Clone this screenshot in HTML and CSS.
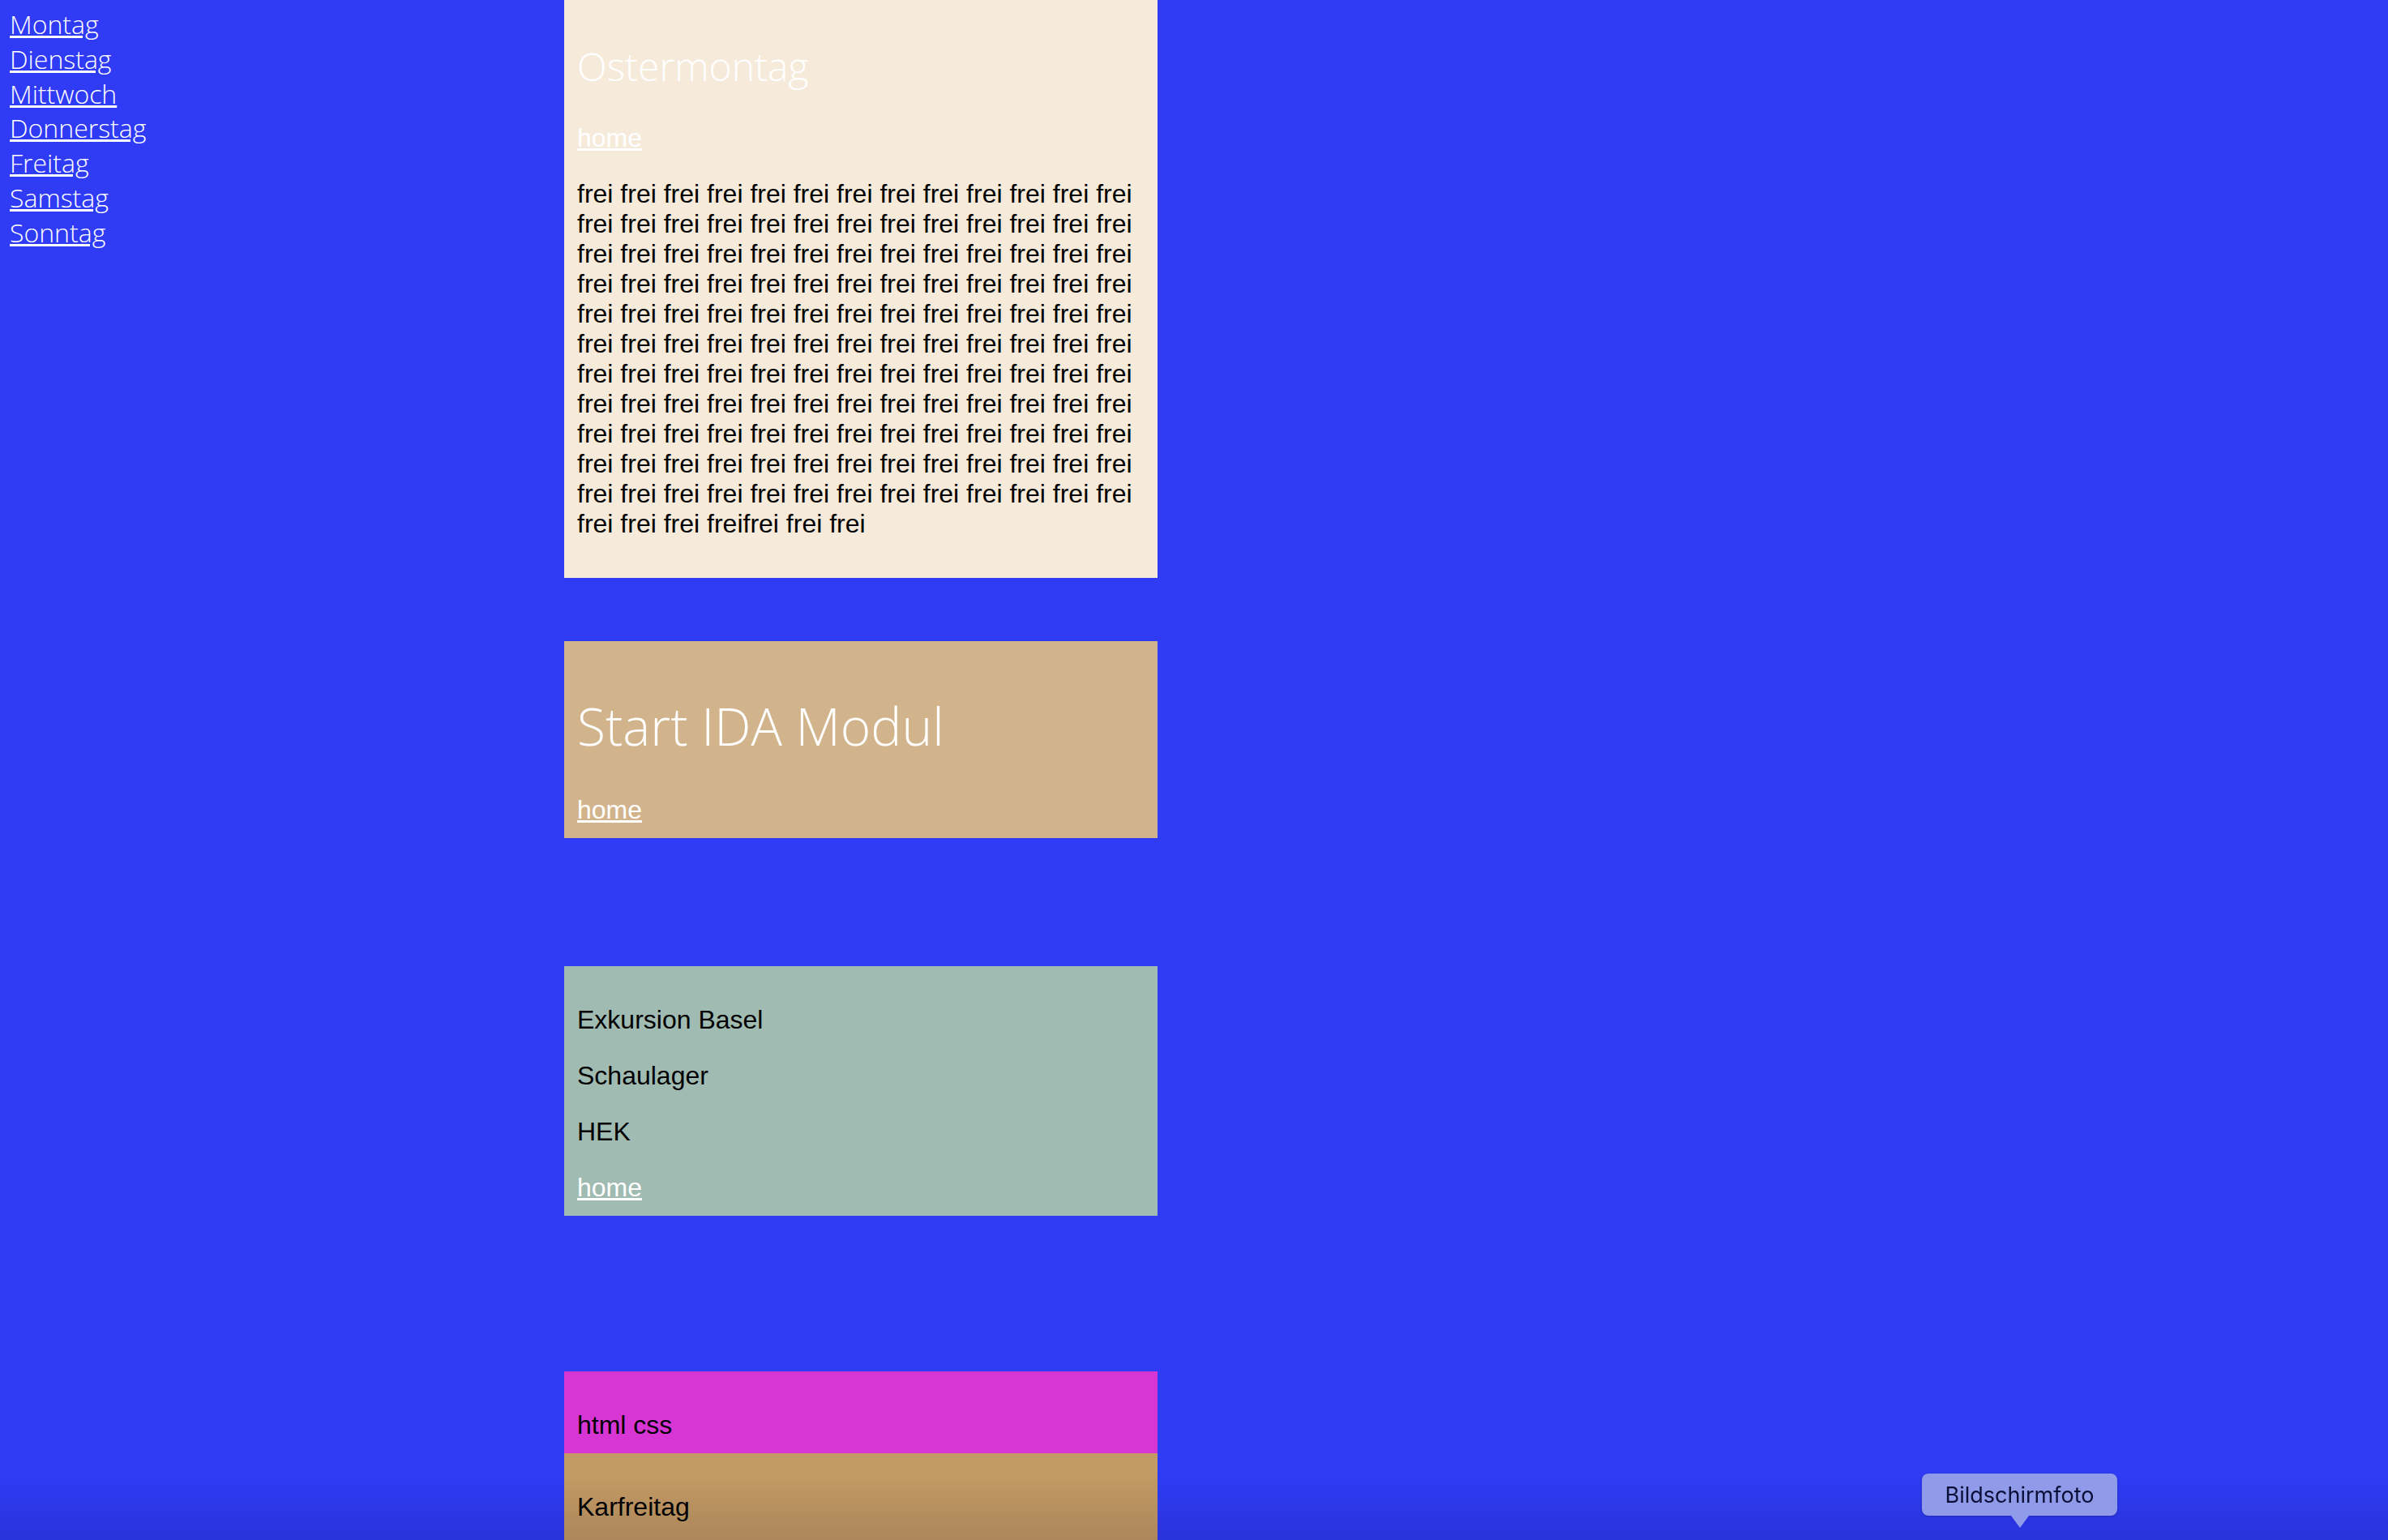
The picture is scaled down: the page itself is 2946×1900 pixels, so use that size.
FILE: index.html
```html
<!DOCTYPE html>
<html lang="de">
<head>
<meta charset="utf-8">
<title>Woche</title>
<link rel="stylesheet" href="styles.css">
</head>
<body>
<div class="page">
  <nav class="days">
    <a href="#">Montag</a>
    <a href="#">Dienstag</a>
    <a href="#">Mittwoch</a>
    <a href="#">Donnerstag</a>
    <a href="#">Freitag</a>
    <a href="#">Samstag</a>
    <a href="#">Sonntag</a>
  </nav>
  <main class="column">
    <section class="panel panel-ostern">
      <h2 class="title title-small">Ostermontag</h2>
      <a class="home" href="#">home</a>
      <p class="text">frei frei frei frei frei frei frei frei frei frei frei frei frei
frei frei frei frei frei frei frei frei frei frei frei frei frei
frei frei frei frei frei frei frei frei frei frei frei frei frei
frei frei frei frei frei frei frei frei frei frei frei frei frei
frei frei frei frei frei frei frei frei frei frei frei frei frei
frei frei frei frei frei frei frei frei frei frei frei frei frei
frei frei frei frei frei frei frei frei frei frei frei frei frei
frei frei frei frei frei frei frei frei frei frei frei frei frei
frei frei frei frei frei frei frei frei frei frei frei frei frei
frei frei frei frei frei frei frei frei frei frei frei frei frei
frei frei frei frei frei frei frei frei frei frei frei frei frei
frei frei frei freifrei frei frei</p>
    </section>
    <section class="panel panel-ida">
      <h1 class="title title-big">Start IDA Modul</h1>
      <a class="home" href="#">home</a>
    </section>
    <section class="panel panel-basel">
      <p class="text">Exkursion Basel</p>
      <p class="text">Schaulager</p>
      <p class="text">HEK</p>
      <a class="home" href="#">home</a>
    </section>
    <section class="panel panel-html">
      <p class="text">html css</p>
    </section>
    <section class="panel panel-kar">
      <p class="text">Karfreitag</p>
    </section>
  </main>
</div>
<div class="dock-shade"></div>
<div class="dock-tip">Bildschirmfoto</div>
</body>
</html>
```

FILE: styles.css
```css
html, body {
  margin: 0;
  padding: 0;
}
body {
  background: #2f3bf5;
  height: 1900px;
  overflow: hidden;
  font-family: "Liberation Sans", Arial, sans-serif;
}
.page {
  display: flex;
  align-items: flex-start;
}
.days {
  width: 684px;
  padding: 9px 0 0 12px;
  display: flex;
  flex-direction: column;
  align-items: flex-start;
}
.days a {
  font-family: "Open Sans", sans-serif;
  font-weight: 300;
  font-size: 32px;
  line-height: 42.8px;
  color: #ffffff;
  text-decoration: underline;
}
.column {
  width: 732px;
  display: flex;
  flex-direction: column;
}
.panel {
  padding: 16px;
}
.panel-ostern {
  background: #f6ebdb;
}
.panel-ida {
  background: #d2b48c;
  margin-top: 78px;
}
.panel-basel {
  background: #a0bbb2;
  margin-top: 158px;
}
.panel-html {
  background: #d836d4;
  margin-top: 192px;
}
.panel-kar {
  background: #c49a64;
  padding-bottom: 40px;
}
.title {
  font-family: "Open Sans", sans-serif;
  font-weight: 300;
  color: #ffffff;
  line-height: 1.362;
}
.title-small {
  font-size: 48px;
  margin: 33px 0 38px;
}
.title-big {
  font-size: 64px;
  margin: 45px 0 41px;
}
.home {
  display: block;
  font-size: 32px;
  line-height: 37px;
  color: #ffffff;
  text-decoration: underline;
  align-self: flex-start;
}
.text {
  font-size: 32px;
  line-height: 37px;
  color: #000000;
  margin: 32px 0;
}
.panel-html .text {
  margin-bottom: 0;
}
.dock-shade {
  position: fixed;
  left: 0;
  right: 0;
  bottom: 0;
  height: 80px;
  background: linear-gradient(to bottom, rgba(0, 0, 30, 0), rgba(0, 0, 30, 0.12));
  pointer-events: none;
}
.dock-tip {
  position: fixed;
  left: 2371px;
  top: 1818px;
  width: 241px;
  height: 52px;
  border-radius: 8px;
  background: #8f9ae8;
  color: #0b0f38;
  font-family: "Inter", "Roboto", sans-serif;
  font-size: 27px;
  display: flex;
  align-items: center;
  justify-content: center;
  box-shadow: 0 1px 3px rgba(0, 0, 40, 0.25);
}
.dock-tip::after {
  content: "";
  position: absolute;
  left: 50%;
  top: 100%;
  margin-left: -11px;
  border-left: 11px solid transparent;
  border-right: 11px solid transparent;
  border-top: 15px solid #8f9ae8;
}
```
